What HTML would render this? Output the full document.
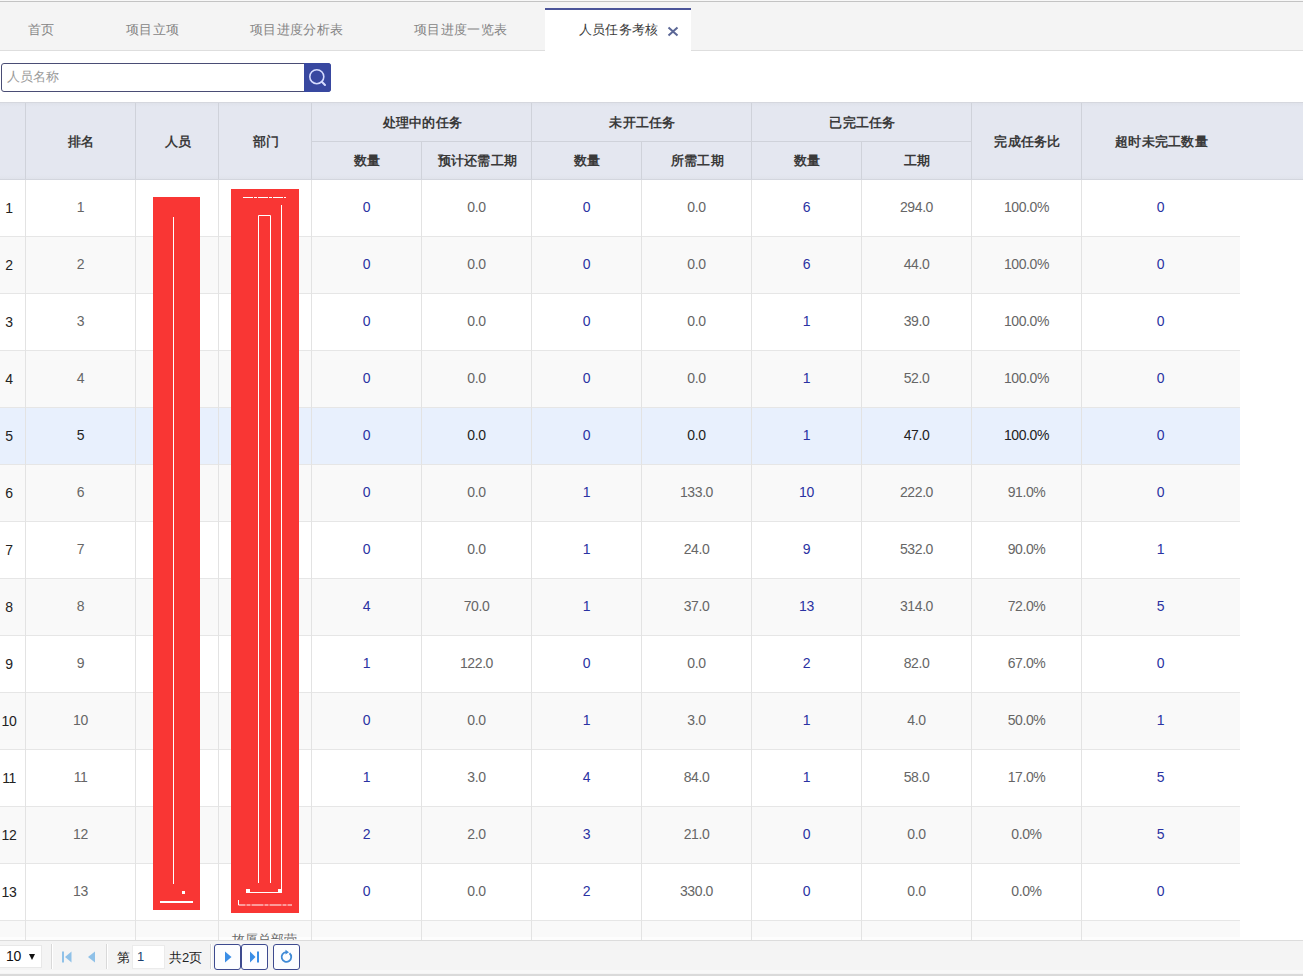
<!DOCTYPE html><html><head><meta charset="utf-8"><style>
*{margin:0;padding:0;box-sizing:border-box}
html,body{width:1303px;height:976px;overflow:hidden;background:#fff;font-family:"Liberation Sans",sans-serif}
.a{position:absolute}
.t{position:absolute;white-space:nowrap;text-align:center;line-height:1}
.tab{color:#858585;font-size:13px;letter-spacing:0.33px}
.hd{font-weight:bold;color:#3a3a3a;font-size:13px;letter-spacing:0.3px}
.num{color:#666;font-size:14px;letter-spacing:-0.4px}
.lnk{color:#2a32a2;font-size:14px;letter-spacing:-0.4px}
.rn{color:#222;font-size:14px;letter-spacing:-0.4px}
.cn{font-size:13px;letter-spacing:0}
</style></head><body>
<div class="a" style="left:0;top:0;width:1303px;height:1px;background:#f7f7f7"></div>
<div class="a" style="left:0;top:1px;width:1303px;height:1px;background:#c3c3c3"></div>
<div class="a" style="left:0;top:2px;width:1303px;height:48px;background:#f4f4f4"></div>
<div class="a" style="left:0;top:50px;width:1303px;height:1px;background:#dedede"></div>
<div class="t tab" style="left:28px;top:23px">首页</div>
<div class="t tab" style="left:126px;top:23px">项目立项</div>
<div class="t tab" style="left:250px;top:23px">项目进度分析表</div>
<div class="t tab" style="left:414px;top:23px">项目进度一览表</div>
<div class="a" style="left:545px;top:8px;width:146px;height:43px;background:#fff"></div>
<div class="a" style="left:545px;top:8px;width:146px;height:2px;background:#4b5499"></div>
<div class="t" style="left:579px;top:23px;color:#3a3a3a;font-size:13px;letter-spacing:0.2px">人员任务考核</div>
<svg class="a" style="left:667px;top:26px" width="12" height="11" viewBox="0 0 12 11"><path d="M1.5 1.5L10.5 9.5M10.5 1.5L1.5 9.5" stroke="#5b6796" stroke-width="2"/></svg>
<div class="a" style="left:1px;top:63px;width:330px;height:29px;border:1px solid #4a4d75;border-radius:3px;background:#fff"></div>
<div class="t" style="left:7px;top:70px;color:#9a9a9a;font-size:13px">人员名称</div>
<div class="a" style="left:304px;top:63px;width:27px;height:29px;background:#3848a0;border-radius:0 3px 3px 0"></div>
<svg class="a" style="left:304px;top:63px" width="27" height="29" viewBox="0 0 27 29"><circle cx="12.8" cy="13.7" r="7" fill="none" stroke="#d6dcff" stroke-width="1.6"/><path d="M17.8 18.7L21 22" stroke="#d6dcff" stroke-width="2" stroke-linecap="round"/></svg>
<div class="a" style="left:0;top:102px;width:1303px;height:1px;background:#d5d7de"></div>
<div class="a" style="left:0;top:103px;width:1303px;height:76px;background:linear-gradient(#dfe2ea,#e4e7f0 4px,#e4e7f0 72px,#e0e3eb)"></div>
<div class="a" style="left:0;top:179px;width:1303px;height:1px;background:#d3d6de"></div>
<div class="a" style="left:25px;top:103px;width:1px;height:76px;background:#cfd2da"></div>
<div class="a" style="left:135px;top:103px;width:1px;height:76px;background:#cfd2da"></div>
<div class="a" style="left:218px;top:103px;width:1px;height:76px;background:#cfd2da"></div>
<div class="a" style="left:311px;top:103px;width:1px;height:76px;background:#cfd2da"></div>
<div class="a" style="left:421px;top:142px;width:1px;height:37px;background:#cfd2da"></div>
<div class="a" style="left:531px;top:103px;width:1px;height:76px;background:#cfd2da"></div>
<div class="a" style="left:641px;top:142px;width:1px;height:37px;background:#cfd2da"></div>
<div class="a" style="left:751px;top:103px;width:1px;height:76px;background:#cfd2da"></div>
<div class="a" style="left:861px;top:142px;width:1px;height:37px;background:#cfd2da"></div>
<div class="a" style="left:971px;top:103px;width:1px;height:76px;background:#cfd2da"></div>
<div class="a" style="left:1081px;top:103px;width:1px;height:76px;background:#cfd2da"></div>
<div class="a" style="left:311px;top:141px;width:660px;height:1px;background:#cfd2da"></div>
<div class="t hd" style="left:-18.5px;width:200px;top:135px">排名</div>
<div class="t hd" style="left:78.0px;width:200px;top:135px">人员</div>
<div class="t hd" style="left:166.0px;width:200px;top:135px">部门</div>
<div class="t hd" style="left:927.5px;width:200px;top:135px">完成任务比</div>
<div class="t hd" style="left:1061.5px;width:200px;top:135px">超时未完工数量</div>
<div class="t hd" style="left:322.5px;width:200px;top:116px">处理中的任务</div>
<div class="t hd" style="left:542.5px;width:200px;top:116px">未开工任务</div>
<div class="t hd" style="left:762.5px;width:200px;top:116px">已完工任务</div>
<div class="t hd" style="left:267.5px;width:200px;top:154px">数量</div>
<div class="t hd" style="left:377.5px;width:200px;top:154px">预计还需工期</div>
<div class="t hd" style="left:487.5px;width:200px;top:154px">数量</div>
<div class="t hd" style="left:597.5px;width:200px;top:154px">所需工期</div>
<div class="t hd" style="left:707.5px;width:200px;top:154px">数量</div>
<div class="t hd" style="left:817.5px;width:200px;top:154px">工期</div>
<div class="a" style="left:0;top:180px;width:1240px;height:56px;background:#ffffff"></div>
<div class="a" style="left:0;top:236px;width:1240px;height:1px;background:#e6e6e6"></div>
<div class="a" style="left:0;top:237px;width:1240px;height:56px;background:#f9f9f9"></div>
<div class="a" style="left:0;top:293px;width:1240px;height:1px;background:#e6e6e6"></div>
<div class="a" style="left:0;top:294px;width:1240px;height:56px;background:#ffffff"></div>
<div class="a" style="left:0;top:350px;width:1240px;height:1px;background:#e6e6e6"></div>
<div class="a" style="left:0;top:351px;width:1240px;height:56px;background:#f9f9f9"></div>
<div class="a" style="left:0;top:407px;width:1240px;height:1px;background:#e6e6e6"></div>
<div class="a" style="left:0;top:408px;width:1240px;height:56px;background:#e8f0fd"></div>
<div class="a" style="left:0;top:464px;width:1240px;height:1px;background:#e6e6e6"></div>
<div class="a" style="left:0;top:465px;width:1240px;height:56px;background:#f9f9f9"></div>
<div class="a" style="left:0;top:521px;width:1240px;height:1px;background:#e6e6e6"></div>
<div class="a" style="left:0;top:522px;width:1240px;height:56px;background:#ffffff"></div>
<div class="a" style="left:0;top:578px;width:1240px;height:1px;background:#e6e6e6"></div>
<div class="a" style="left:0;top:579px;width:1240px;height:56px;background:#f9f9f9"></div>
<div class="a" style="left:0;top:635px;width:1240px;height:1px;background:#e6e6e6"></div>
<div class="a" style="left:0;top:636px;width:1240px;height:56px;background:#ffffff"></div>
<div class="a" style="left:0;top:692px;width:1240px;height:1px;background:#e6e6e6"></div>
<div class="a" style="left:0;top:693px;width:1240px;height:56px;background:#f9f9f9"></div>
<div class="a" style="left:0;top:749px;width:1240px;height:1px;background:#e6e6e6"></div>
<div class="a" style="left:0;top:750px;width:1240px;height:56px;background:#ffffff"></div>
<div class="a" style="left:0;top:806px;width:1240px;height:1px;background:#e6e6e6"></div>
<div class="a" style="left:0;top:807px;width:1240px;height:56px;background:#f9f9f9"></div>
<div class="a" style="left:0;top:863px;width:1240px;height:1px;background:#e6e6e6"></div>
<div class="a" style="left:0;top:864px;width:1240px;height:56px;background:#ffffff"></div>
<div class="a" style="left:0;top:920px;width:1240px;height:1px;background:#e6e6e6"></div>
<div class="a" style="left:0;top:921px;width:1240px;height:16px;background:#f9f9f9"></div>
<div class="a" style="left:0;top:937px;width:1240px;height:3px;background:#fdfdfd"></div>
<div class="a" style="left:25px;top:180px;width:1px;height:760px;background:#e3e3e3"></div>
<div class="a" style="left:135px;top:180px;width:1px;height:760px;background:#e3e3e3"></div>
<div class="a" style="left:218px;top:180px;width:1px;height:760px;background:#e3e3e3"></div>
<div class="a" style="left:311px;top:180px;width:1px;height:760px;background:#e3e3e3"></div>
<div class="a" style="left:421px;top:180px;width:1px;height:760px;background:#e3e3e3"></div>
<div class="a" style="left:531px;top:180px;width:1px;height:760px;background:#e3e3e3"></div>
<div class="a" style="left:641px;top:180px;width:1px;height:760px;background:#e3e3e3"></div>
<div class="a" style="left:751px;top:180px;width:1px;height:760px;background:#e3e3e3"></div>
<div class="a" style="left:861px;top:180px;width:1px;height:760px;background:#e3e3e3"></div>
<div class="a" style="left:971px;top:180px;width:1px;height:760px;background:#e3e3e3"></div>
<div class="a" style="left:1081px;top:180px;width:1px;height:760px;background:#e3e3e3"></div>
<div class="t rn" style="left:-91px;width:200px;top:201px">1</div>
<div class="t num" style="left:-19.5px;width:200px;top:200px">1</div>
<div class="t lnk" style="left:266.5px;width:200px;top:200px">0</div>
<div class="t num" style="left:376.5px;width:200px;top:200px">0.0</div>
<div class="t lnk" style="left:486.5px;width:200px;top:200px">0</div>
<div class="t num" style="left:596.5px;width:200px;top:200px">0.0</div>
<div class="t lnk" style="left:706.5px;width:200px;top:200px">6</div>
<div class="t num" style="left:816.5px;width:200px;top:200px">294.0</div>
<div class="t num" style="left:926.5px;width:200px;top:200px">100.0%</div>
<div class="t lnk" style="left:1060.5px;width:200px;top:200px">0</div>
<div class="t rn" style="left:-91px;width:200px;top:258px">2</div>
<div class="t num" style="left:-19.5px;width:200px;top:257px">2</div>
<div class="t lnk" style="left:266.5px;width:200px;top:257px">0</div>
<div class="t num" style="left:376.5px;width:200px;top:257px">0.0</div>
<div class="t lnk" style="left:486.5px;width:200px;top:257px">0</div>
<div class="t num" style="left:596.5px;width:200px;top:257px">0.0</div>
<div class="t lnk" style="left:706.5px;width:200px;top:257px">6</div>
<div class="t num" style="left:816.5px;width:200px;top:257px">44.0</div>
<div class="t num" style="left:926.5px;width:200px;top:257px">100.0%</div>
<div class="t lnk" style="left:1060.5px;width:200px;top:257px">0</div>
<div class="t rn" style="left:-91px;width:200px;top:315px">3</div>
<div class="t num" style="left:-19.5px;width:200px;top:314px">3</div>
<div class="t lnk" style="left:266.5px;width:200px;top:314px">0</div>
<div class="t num" style="left:376.5px;width:200px;top:314px">0.0</div>
<div class="t lnk" style="left:486.5px;width:200px;top:314px">0</div>
<div class="t num" style="left:596.5px;width:200px;top:314px">0.0</div>
<div class="t lnk" style="left:706.5px;width:200px;top:314px">1</div>
<div class="t num" style="left:816.5px;width:200px;top:314px">39.0</div>
<div class="t num" style="left:926.5px;width:200px;top:314px">100.0%</div>
<div class="t lnk" style="left:1060.5px;width:200px;top:314px">0</div>
<div class="t rn" style="left:-91px;width:200px;top:372px">4</div>
<div class="t num" style="left:-19.5px;width:200px;top:371px">4</div>
<div class="t lnk" style="left:266.5px;width:200px;top:371px">0</div>
<div class="t num" style="left:376.5px;width:200px;top:371px">0.0</div>
<div class="t lnk" style="left:486.5px;width:200px;top:371px">0</div>
<div class="t num" style="left:596.5px;width:200px;top:371px">0.0</div>
<div class="t lnk" style="left:706.5px;width:200px;top:371px">1</div>
<div class="t num" style="left:816.5px;width:200px;top:371px">52.0</div>
<div class="t num" style="left:926.5px;width:200px;top:371px">100.0%</div>
<div class="t lnk" style="left:1060.5px;width:200px;top:371px">0</div>
<div class="t rn" style="left:-91px;width:200px;top:429px">5</div>
<div class="t rn" style="left:-19.5px;width:200px;top:428px">5</div>
<div class="t lnk" style="left:266.5px;width:200px;top:428px">0</div>
<div class="t rn" style="left:376.5px;width:200px;top:428px">0.0</div>
<div class="t lnk" style="left:486.5px;width:200px;top:428px">0</div>
<div class="t rn" style="left:596.5px;width:200px;top:428px">0.0</div>
<div class="t lnk" style="left:706.5px;width:200px;top:428px">1</div>
<div class="t rn" style="left:816.5px;width:200px;top:428px">47.0</div>
<div class="t rn" style="left:926.5px;width:200px;top:428px">100.0%</div>
<div class="t lnk" style="left:1060.5px;width:200px;top:428px">0</div>
<div class="t rn" style="left:-91px;width:200px;top:486px">6</div>
<div class="t num" style="left:-19.5px;width:200px;top:485px">6</div>
<div class="t lnk" style="left:266.5px;width:200px;top:485px">0</div>
<div class="t num" style="left:376.5px;width:200px;top:485px">0.0</div>
<div class="t lnk" style="left:486.5px;width:200px;top:485px">1</div>
<div class="t num" style="left:596.5px;width:200px;top:485px">133.0</div>
<div class="t lnk" style="left:706.5px;width:200px;top:485px">10</div>
<div class="t num" style="left:816.5px;width:200px;top:485px">222.0</div>
<div class="t num" style="left:926.5px;width:200px;top:485px">91.0%</div>
<div class="t lnk" style="left:1060.5px;width:200px;top:485px">0</div>
<div class="t rn" style="left:-91px;width:200px;top:543px">7</div>
<div class="t num" style="left:-19.5px;width:200px;top:542px">7</div>
<div class="t lnk" style="left:266.5px;width:200px;top:542px">0</div>
<div class="t num" style="left:376.5px;width:200px;top:542px">0.0</div>
<div class="t lnk" style="left:486.5px;width:200px;top:542px">1</div>
<div class="t num" style="left:596.5px;width:200px;top:542px">24.0</div>
<div class="t lnk" style="left:706.5px;width:200px;top:542px">9</div>
<div class="t num" style="left:816.5px;width:200px;top:542px">532.0</div>
<div class="t num" style="left:926.5px;width:200px;top:542px">90.0%</div>
<div class="t lnk" style="left:1060.5px;width:200px;top:542px">1</div>
<div class="t rn" style="left:-91px;width:200px;top:600px">8</div>
<div class="t num" style="left:-19.5px;width:200px;top:599px">8</div>
<div class="t lnk" style="left:266.5px;width:200px;top:599px">4</div>
<div class="t num" style="left:376.5px;width:200px;top:599px">70.0</div>
<div class="t lnk" style="left:486.5px;width:200px;top:599px">1</div>
<div class="t num" style="left:596.5px;width:200px;top:599px">37.0</div>
<div class="t lnk" style="left:706.5px;width:200px;top:599px">13</div>
<div class="t num" style="left:816.5px;width:200px;top:599px">314.0</div>
<div class="t num" style="left:926.5px;width:200px;top:599px">72.0%</div>
<div class="t lnk" style="left:1060.5px;width:200px;top:599px">5</div>
<div class="t rn" style="left:-91px;width:200px;top:657px">9</div>
<div class="t num" style="left:-19.5px;width:200px;top:656px">9</div>
<div class="t lnk" style="left:266.5px;width:200px;top:656px">1</div>
<div class="t num" style="left:376.5px;width:200px;top:656px">122.0</div>
<div class="t lnk" style="left:486.5px;width:200px;top:656px">0</div>
<div class="t num" style="left:596.5px;width:200px;top:656px">0.0</div>
<div class="t lnk" style="left:706.5px;width:200px;top:656px">2</div>
<div class="t num" style="left:816.5px;width:200px;top:656px">82.0</div>
<div class="t num" style="left:926.5px;width:200px;top:656px">67.0%</div>
<div class="t lnk" style="left:1060.5px;width:200px;top:656px">0</div>
<div class="t rn" style="left:-91px;width:200px;top:714px">10</div>
<div class="t num" style="left:-19.5px;width:200px;top:713px">10</div>
<div class="t lnk" style="left:266.5px;width:200px;top:713px">0</div>
<div class="t num" style="left:376.5px;width:200px;top:713px">0.0</div>
<div class="t lnk" style="left:486.5px;width:200px;top:713px">1</div>
<div class="t num" style="left:596.5px;width:200px;top:713px">3.0</div>
<div class="t lnk" style="left:706.5px;width:200px;top:713px">1</div>
<div class="t num" style="left:816.5px;width:200px;top:713px">4.0</div>
<div class="t num" style="left:926.5px;width:200px;top:713px">50.0%</div>
<div class="t lnk" style="left:1060.5px;width:200px;top:713px">1</div>
<div class="t rn" style="left:-91px;width:200px;top:771px">11</div>
<div class="t num" style="left:-19.5px;width:200px;top:770px">11</div>
<div class="t lnk" style="left:266.5px;width:200px;top:770px">1</div>
<div class="t num" style="left:376.5px;width:200px;top:770px">3.0</div>
<div class="t lnk" style="left:486.5px;width:200px;top:770px">4</div>
<div class="t num" style="left:596.5px;width:200px;top:770px">84.0</div>
<div class="t lnk" style="left:706.5px;width:200px;top:770px">1</div>
<div class="t num" style="left:816.5px;width:200px;top:770px">58.0</div>
<div class="t num" style="left:926.5px;width:200px;top:770px">17.0%</div>
<div class="t lnk" style="left:1060.5px;width:200px;top:770px">5</div>
<div class="t rn" style="left:-91px;width:200px;top:828px">12</div>
<div class="t num" style="left:-19.5px;width:200px;top:827px">12</div>
<div class="t lnk" style="left:266.5px;width:200px;top:827px">2</div>
<div class="t num" style="left:376.5px;width:200px;top:827px">2.0</div>
<div class="t lnk" style="left:486.5px;width:200px;top:827px">3</div>
<div class="t num" style="left:596.5px;width:200px;top:827px">21.0</div>
<div class="t lnk" style="left:706.5px;width:200px;top:827px">0</div>
<div class="t num" style="left:816.5px;width:200px;top:827px">0.0</div>
<div class="t num" style="left:926.5px;width:200px;top:827px">0.0%</div>
<div class="t lnk" style="left:1060.5px;width:200px;top:827px">5</div>
<div class="t rn" style="left:-91px;width:200px;top:885px">13</div>
<div class="t num" style="left:-19.5px;width:200px;top:884px">13</div>
<div class="t lnk" style="left:266.5px;width:200px;top:884px">0</div>
<div class="t num" style="left:376.5px;width:200px;top:884px">0.0</div>
<div class="t lnk" style="left:486.5px;width:200px;top:884px">2</div>
<div class="t num" style="left:596.5px;width:200px;top:884px">330.0</div>
<div class="t lnk" style="left:706.5px;width:200px;top:884px">0</div>
<div class="t num" style="left:816.5px;width:200px;top:884px">0.0</div>
<div class="t num" style="left:926.5px;width:200px;top:884px">0.0%</div>
<div class="t lnk" style="left:1060.5px;width:200px;top:884px">0</div>
<div class="t num cn" style="left:232px;top:933px">故厦总部营</div>
<div class="a" style="left:153px;top:197px;width:47px;height:713px;background:#f93634"></div>
<div class="a" style="left:231px;top:189px;width:68px;height:724px;background:#f93634"></div>
<svg class="a" style="left:0;top:0" width="1303" height="976">
<g stroke="#fff" fill="none" stroke-width="1">
<path d="M173.5 217V884"/>
<path d="M160 902H193" stroke-width="2"/>
<rect x="182" y="891" width="3" height="3" fill="#fff" stroke="none"/>
<path d="M243 197.5H286" stroke-dasharray="10 1 3 1"/>
<path d="M281.5 205V893"/>
<path d="M258.5 883V215.5H270.5V883"/>
<path d="M247 892.5H282"/>
<rect x="246" y="889" width="4" height="4" fill="#fff" stroke="none"/>
<rect x="278" y="889" width="4" height="4" fill="#fff" stroke="none"/>
<path d="M238.5 900V905H292" stroke-dasharray="12 1 4 1"/>
</g></svg>
<div class="a" style="left:0;top:940px;width:1303px;height:1px;background:#dcdcdc"></div>
<div class="a" style="left:0;top:941px;width:1303px;height:33px;background:#f4f4f4"></div>
<div class="a" style="left:0;top:970px;width:1303px;height:3px;background:#f8f8f8"></div>
<div class="a" style="left:0;top:974px;width:1303px;height:2px;background:#dadada"></div>
<div class="a" style="left:0;top:945px;width:42px;height:23px;background:#fff;border:1px solid #e8e8e8;border-left:none"></div>
<div class="t" style="left:6px;top:949px;color:#111;font-size:14px;letter-spacing:-0.4px">10</div>
<svg class="a" style="left:29px;top:954px" width="6" height="6"><path d="M0 0H6L3 6Z" fill="#111"/></svg>
<div class="a" style="left:51px;top:944px;width:1px;height:25px;background:#d9d9d9"></div>
<div class="a" style="left:52px;top:944px;width:1px;height:25px;background:#fff"></div>
<svg class="a" style="left:62px;top:951px" width="12" height="12"><rect x="0" y="0.5" width="2" height="11" fill="#8fc1e8"/><path d="M9.5 0.5V11.5L3 6Z" fill="#8fc1e8"/></svg>
<svg class="a" style="left:87px;top:951px" width="10" height="12"><path d="M8 0.5V11.5L1 6Z" fill="#8fc1e8"/></svg>
<div class="a" style="left:106px;top:944px;width:1px;height:25px;background:#d9d9d9"></div>
<div class="a" style="left:107px;top:944px;width:1px;height:25px;background:#fff"></div>
<div class="t" style="left:117px;top:951px;color:#222;font-size:13px">第</div>
<div class="a" style="left:132px;top:945px;width:33px;height:24px;background:#fff;border:1px solid #ebebeb"></div>
<div class="t" style="left:137px;top:950px;color:#1b3f6e;font-size:13px">1</div>
<div class="t" style="left:169px;top:951px;color:#222;font-size:13px">共2页</div>
<div class="a" style="left:210px;top:944px;width:1px;height:25px;background:#d9d9d9"></div>
<div class="a" style="left:211px;top:944px;width:1px;height:25px;background:#fff"></div>
<div class="a" style="left:214px;top:944px;width:27px;height:26px;border:1px solid #3d4a8f;border-radius:3px;background:#fcfdff"></div>
<div class="a" style="left:241px;top:944px;width:27px;height:26px;border:1px solid #3d4a8f;border-radius:3px;background:#fcfdff"></div>
<div class="a" style="left:273px;top:944px;width:27px;height:26px;border:1px solid #3d4a8f;border-radius:3px;background:#fcfdff"></div>
<svg class="a" style="left:214px;top:944px" width="27" height="26"><path d="M11 7.5V18.5L17.5 13Z" fill="#3a8ee6"/></svg>
<svg class="a" style="left:241px;top:944px" width="27" height="26"><path d="M9 7.5V18.5L14.5 13Z" fill="#3a8ee6"/><rect x="16" y="7.5" width="2" height="11" fill="#3a8ee6"/></svg>
<svg class="a" style="left:273px;top:944px" width="27" height="26"><path d="M16.5 9.3A4.8 4.8 0 1 1 13.2 8.2" fill="none" stroke="#3f8ad6" stroke-width="1.8"/><path d="M12.5 5.8L16 8.2L12.5 10.6Z" fill="#3f8ad6"/></svg>
</body></html>
